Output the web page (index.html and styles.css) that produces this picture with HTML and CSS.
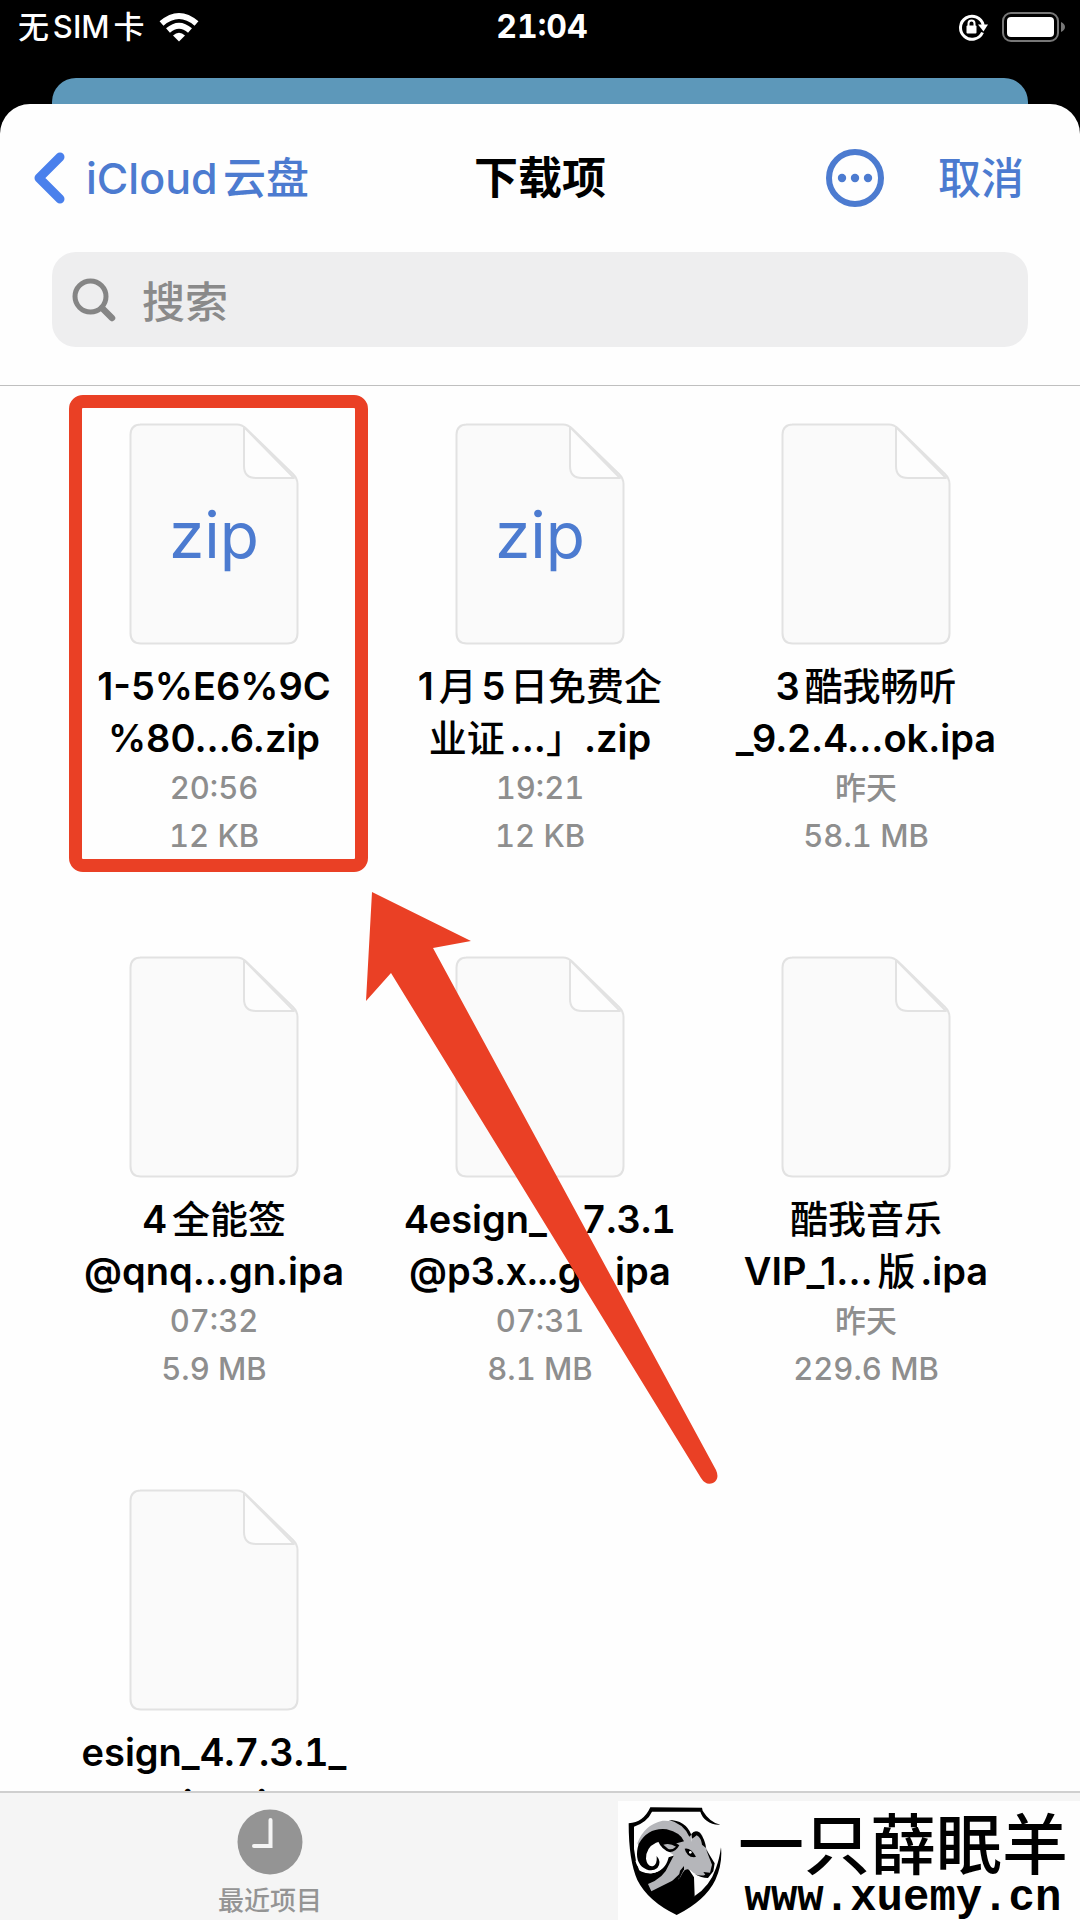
FILE: index.html
```html
<!DOCTYPE html>
<html lang="zh-CN">
<head>
<meta charset="utf-8">
<meta name="viewport" content="width=device-width, initial-scale=1">
<title>下载项</title>
<link rel="stylesheet" href="styles.css">
</head>
<body>
<svg class="defs" aria-hidden="true">
  <symbol id="doc" viewBox="0 0 170 222">
    <path d="M11 1.5H108Q113 1.5 117 5.500L164 51Q168.500 55.500 168.500 61V210Q168.500 220.500 158 220.500H12Q1.500 220.500 1.500 210V12Q1.500 1.500 12 1.500Z" fill="#fafafa" stroke="#e2e2e2" stroke-width="2"/>
    <path d="M115 4V43Q115 55 127 55H165Z" fill="#fdfdfd" stroke="#e2e2e2" stroke-width="2" stroke-linejoin="round"/>
  </symbol>
</svg>

<header class="status">
  <div class="carrier">
    <span>无SIM卡</span>
    <svg width="40" height="30" viewBox="0 0 40 30" fill="none" stroke="#fff" stroke-width="6" aria-hidden="true">
      <path d="M2.500 11.500Q20 -3.500 37.500 11.500"/>
      <path d="M9 18.500Q20 9 31 18.500"/>
      <path d="M14 23.500Q20 18 26 23.500L20 29.500Z" fill="#fff" stroke="none"/>
    </svg>
  </div>
  <time>21:04</time>
  <div class="power">
    <svg width="30" height="28" viewBox="0 0 30 28" fill="none" stroke="#fff" stroke-width="3" aria-hidden="true">
      <path d="M24.500 19.500A11.500 11.500 0 1 1 25.200 12"/>
      <path d="M20 11.500H30L25.500 18.500Z" fill="#fff" stroke="none"/>
      <rect x="8.500" y="12.500" width="10" height="8" rx="1" fill="#fff" stroke="none"/>
      <path d="M10.500 13V10.500A3 3 0 0 1 16.500 10.500V13" stroke-width="2"/>
    </svg>
    <svg width="64" height="30" viewBox="0 0 64 30" aria-hidden="true">
      <rect x="1" y="1" width="55" height="28" rx="8" fill="none" stroke="#777" stroke-width="2"/>
      <rect x="5" y="5" width="47" height="20" rx="4" fill="#fff"/>
      <path d="M59 10Q63 12 63 15T59 20Z" fill="#777"/>
    </svg>
  </div>
</header>
<div class="behind"></div>

<main class="sheet">
  <div class="top">
    <nav class="nav">
      <a class="back" href="#">
        <svg width="34" height="54" viewBox="0 0 34 54" fill="none" stroke="#4a80ec" stroke-width="9" stroke-linecap="round" stroke-linejoin="round" aria-hidden="true"><path d="M28 6L7 27L28 48"/></svg>
        <span>iCloud云盘</span>
      </a>
      <h1>下载项</h1>
      <div class="actions">
        <button type="button" aria-label="更多">
          <svg width="58" height="58" viewBox="0 0 58 58" aria-hidden="true">
            <circle cx="29" cy="29" r="26" fill="none" stroke="#4c7bd0" stroke-width="6"/>
            <g fill="#4c7bd0"><circle cx="16" cy="29" r="4.200"/><circle cx="29" cy="29" r="4.200"/><circle cx="42" cy="29" r="4.200"/></g>
          </svg>
        </button>
        <button type="button">取消</button>
      </div>
    </nav>
    <label class="search">
      <svg width="44" height="44" viewBox="0 0 44 44" fill="none" stroke="#858585" aria-hidden="true"><circle cx="18.500" cy="18.500" r="15.500" stroke-width="5"/><path d="M30 30L40 40" stroke-width="6.500" stroke-linecap="round"/></svg>
      <input type="search" placeholder="搜索" aria-label="搜索">
    </label>
  </div>

  <div class="browser">
    <ul class="files">
      <li class="file marked">
        <div class="thumb"><svg aria-hidden="true"><use href="#doc"/></svg><span>zip</span></div>
        <p class="name">1-5%E6%9C<br>%80...6.zip</p>
        <p class="meta">20:56<br>12 KB</p>
      </li>
      <li class="file">
        <div class="thumb"><svg aria-hidden="true"><use href="#doc"/></svg><span>zip</span></div>
        <p class="name">1<span class="han">月</span>5<span class="han">日免费企</span><br><span class="han">业证</span>...<span class="han">」</span>.zip</p>
        <p class="meta">19:21<br>12 KB</p>
      </li>
      <li class="file">
        <div class="thumb"><svg aria-hidden="true"><use href="#doc"/></svg></div>
        <p class="name">3<span class="han">酷我畅听</span><br>_9.2.4...ok.ipa</p>
        <p class="meta">昨天<br>58.1 MB</p>
      </li>
      <li class="file">
        <div class="thumb"><svg aria-hidden="true"><use href="#doc"/></svg></div>
        <p class="name">4<span class="han">全能签</span><br>@qnq...gn.ipa</p>
        <p class="meta">07:32<br>5.9 MB</p>
      </li>
      <li class="file">
        <div class="thumb"><svg aria-hidden="true"><use href="#doc"/></svg></div>
        <p class="name version">4esign_4.7.3.1<br>@p3.x...gn.ipa</p>
        <p class="meta">07:31<br>8.1 MB</p>
      </li>
      <li class="file">
        <div class="thumb"><svg aria-hidden="true"><use href="#doc"/></svg></div>
        <p class="name"><span class="han">酷我音乐</span><br>VIP_1...<span class="han">版</span>.ipa</p>
        <p class="meta">昨天<br>229.6 MB</p>
      </li>
      <li class="file">
        <div class="thumb"><svg aria-hidden="true"><use href="#doc"/></svg></div>
        <p class="name version">esign_4.7.3.1_<br>unsi...n.ipa</p>
      </li>
    </ul>
    <svg class="arrow" width="352" height="593" viewBox="366 892 352 593" aria-hidden="true">
      <path d="M372 892L471 941L433 948L716 1470Q720 1479 713 1483Q706 1486 701 1478L391 973L366 1001Z" fill="#ea4025"/>
    </svg>
  </div>
</main>

<footer class="tabs">
  <a class="tab" href="#">
    <svg width="66" height="66" viewBox="0 0 66 66" aria-hidden="true"><circle cx="33" cy="33" r="32.500" fill="#949494"/><path d="M33.500 11V37H17" fill="none" stroke="#f5f5f5" stroke-width="4" stroke-linecap="round"/></svg>
    <span>最近项目</span>
  </a>
</footer>

<aside class="brand">
  <svg width="94" height="110" viewBox="38 36 282 330" aria-hidden="true">
    <path d="M105 40L260 41L262 50Q284 86 315 92Q292 94 274 80Q260 70 255 53H110Q96 84 56 98V165Q62 232 104 280L140 306L184 332L238 306Q284 276 302 222Q312 196 317 160Q322 210 300 258Q270 320 184 363Q98 322 66 258Q40 200 40 88Q84 86 105 40Z"/>
    <path d="M58 220Q80 240 110 238Q150 232 160 190L190 180L236 250L238 306L184 358L110 312Q70 270 58 220Z"/>
    <path d="M66 148Q86 92 142 80Q196 78 218 108Q232 124 228 144L236 118Q246 108 260 122L272 160Q286 190 294 212L290 232L276 250Q256 250 234 236Q214 216 202 236Q196 250 188 258L196 236Q176 256 168 262L108 292L98 270Q146 252 160 214L176 184L140 160L192 134Q186 112 152 108Q96 108 70 154Z" fill="#b5b6ba"/>
    <path d="M70 150Q98 100 154 106Q196 116 206 142L176 150Q150 134 122 146Q92 160 92 194Q96 220 114 216Q126 210 124 186Q140 204 126 222Q106 238 80 218Q56 196 70 150Z"/>
    <path d="M128 142Q162 132 192 154Q180 176 162 174Q140 168 128 142Z"/>
    <path d="M144 152Q164 146 182 158Q168 170 158 164Z" fill="#b5b6ba"/>
    <path d="M208 164Q226 160 242 188L236 190Q214 188 208 164Z"/><circle cx="225" cy="175" r="4" fill="#fff"/>
    <path d="M228 120Q238 106 254 116Q270 138 272 162L260 152Q258 132 244 124Q238 130 230 134Z"/>
    <path d="M246 130Q258 136 258 152L248 146Z" fill="#b5b6ba"/>
    <path d="M160 78Q210 78 228 122L222 128Q204 88 160 78Z"/>
    <path d="M272 166L298 208L294 232L278 252Q258 252 238 240Q258 248 270 242L264 234L284 236L290 212Z"/>
    <path d="M62 200Q72 236 108 236Q148 230 156 184" fill="none" stroke="#fff" stroke-width="4"/>
    <path d="M194 230L206 216V226L188 262Z"/>
  </svg>
  <div class="brandtext">
    <strong>一只薛眠羊</strong>
    <span>www.xuemy.cn</span>
  </div>
</aside>
</body>
</html>
```
FILE: styles.css
```css
* {
  box-sizing: border-box;
}

body {
  margin: 0;
  height: 100vh;
  display: flex;
  flex-direction: column;
  position: relative;
  overflow: hidden;
  background: #000;
  color: #000;
  font-family: Inter, "Noto Sans CJK SC", sans-serif;
  font-weight: 500;
  font-variant-numeric: tabular-nums;
  text-autospace: normal;
}

h1, p, ul {
  margin: 0;
  padding: 0;
}

a {
  color: inherit;
  text-decoration: none;
}

button {
  padding: 0;
  border: 0;
  background: none;
  color: inherit;
  font: inherit;
}

svg {
  display: block;
  flex: none;
}

.defs {
  position: absolute;
  width: 0;
  height: 0;
}

.status {
  display: grid;
  grid-template-columns: 1fr auto 1fr;
  align-items: center;
  height: 54px;
  padding: 0 14px 0 18px;
  color: #fff;
  font-size: 31px;
  line-height: 50px;
}

.status time {
  font-size: 32px;
  font-weight: 700;
}

.carrier,
.power {
  display: flex;
  align-items: center;
  gap: 14px;
}

.power {
  justify-content: flex-end;
}

.behind {
  height: 56px;
  margin: 24px 52px -30px;
  border-radius: 24px 24px 0 0;
  background: #5d98ba;
}

.sheet {
  flex: 1;
  min-height: 0;
  display: flex;
  flex-direction: column;
  position: relative;
  border-radius: 30px 30px 0 0;
  background: #fefefe;
}

.top {
  padding: 0 52px 38px;
  border-bottom: 1px solid #bfbfbf;
}

.nav {
  display: grid;
  grid-template-columns: 1fr auto 1fr;
  align-items: center;
  min-height: 148px;
  margin-left: -20px;
  margin-right: -20px;
  color: #4c7bd0;
  font-size: 43px;
  line-height: 44px;
}

.nav h1 {
  color: #000;
  font-size: 44px;
  font-weight: 700;
}

.back {
  display: flex;
  align-items: center;
  gap: 20px;
}

.actions {
  display: flex;
  justify-content: flex-end;
  align-items: center;
  gap: 54px;
  padding-right: 24px;
}

.search {
  display: flex;
  align-items: center;
  gap: 26px;
  height: 95px;
  padding: 0 20px;
  border-radius: 24px;
  background: #eeeeef;
}

.search input {
  flex: 1;
  min-width: 0;
  padding: 4px 0 0;
  border: 0;
  outline: 0;
  background: none;
  font: inherit;
  font-size: 43px;
}

.search input::placeholder {
  color: #8a8a8a;
  opacity: 1;
}

.browser {
  flex: 1;
  min-height: 0;
  position: relative;
  overflow: hidden;
}

.files {
  display: grid;
  grid-template-columns: repeat(3, 1fr);
  row-gap: 96px;
  padding: 37px 51px 0;
  list-style: none;
}

.file {
  position: relative;
  display: flex;
  flex-direction: column;
  align-items: center;
  text-align: center;
}

.marked::after {
  content: "";
  position: absolute;
  inset: -28px 9px -12px 18px;
  border: 13px solid #ea4025;
  border-radius: 14px;
}

.thumb {
  display: grid;
  place-items: center;
  margin-bottom: 15px;
}

.thumb svg {
  grid-area: 1 / 1;
  width: 170px;
  height: 222px;
}

.thumb span {
  grid-area: 1 / 1;
  color: #4c7bd0;
  font-size: 64px;
  font-weight: 400;
}

.name {
  font-size: 38px;
  font-weight: 600;
  font-variant-numeric: normal;
  line-height: 52px;
}

.version {
  font-variant-numeric: tabular-nums;
}

.han {
  font-weight: 500;
}

.meta {
  color: #8e8e8e;
  font-size: 31px;
  line-height: 48px;
}

.arrow {
  position: absolute;
  top: 506px;
  left: calc(50% - 174px);
}

.tabs {
  display: grid;
  grid-template-columns: 1fr 1fr;
  border-top: 2px solid #cfcfcf;
  background: #f5f5f5;
}

.tab {
  display: flex;
  flex-direction: column;
  align-items: center;
  gap: 8px;
  padding: 16px 0 1px;
  color: #949494;
  font-size: 26px;
  line-height: 36px;
}

.brand {
  position: absolute;
  right: 0;
  bottom: 0;
  display: flex;
  align-items: center;
  gap: 16px;
  height: 119px;
  padding: 0 12px 0 10px;
  background: #fefefe;
}

.brandtext {
  display: flex;
  flex-direction: column;
  align-items: center;
  padding-top: 8px;
}

.brandtext strong {
  font-size: 66px;
  font-weight: 500;
  line-height: 66px;
}

.brandtext span {
  font-family: "Liberation Mono", monospace;
  font-size: 44px;
  font-weight: 700;
  line-height: 40px;
}
```
